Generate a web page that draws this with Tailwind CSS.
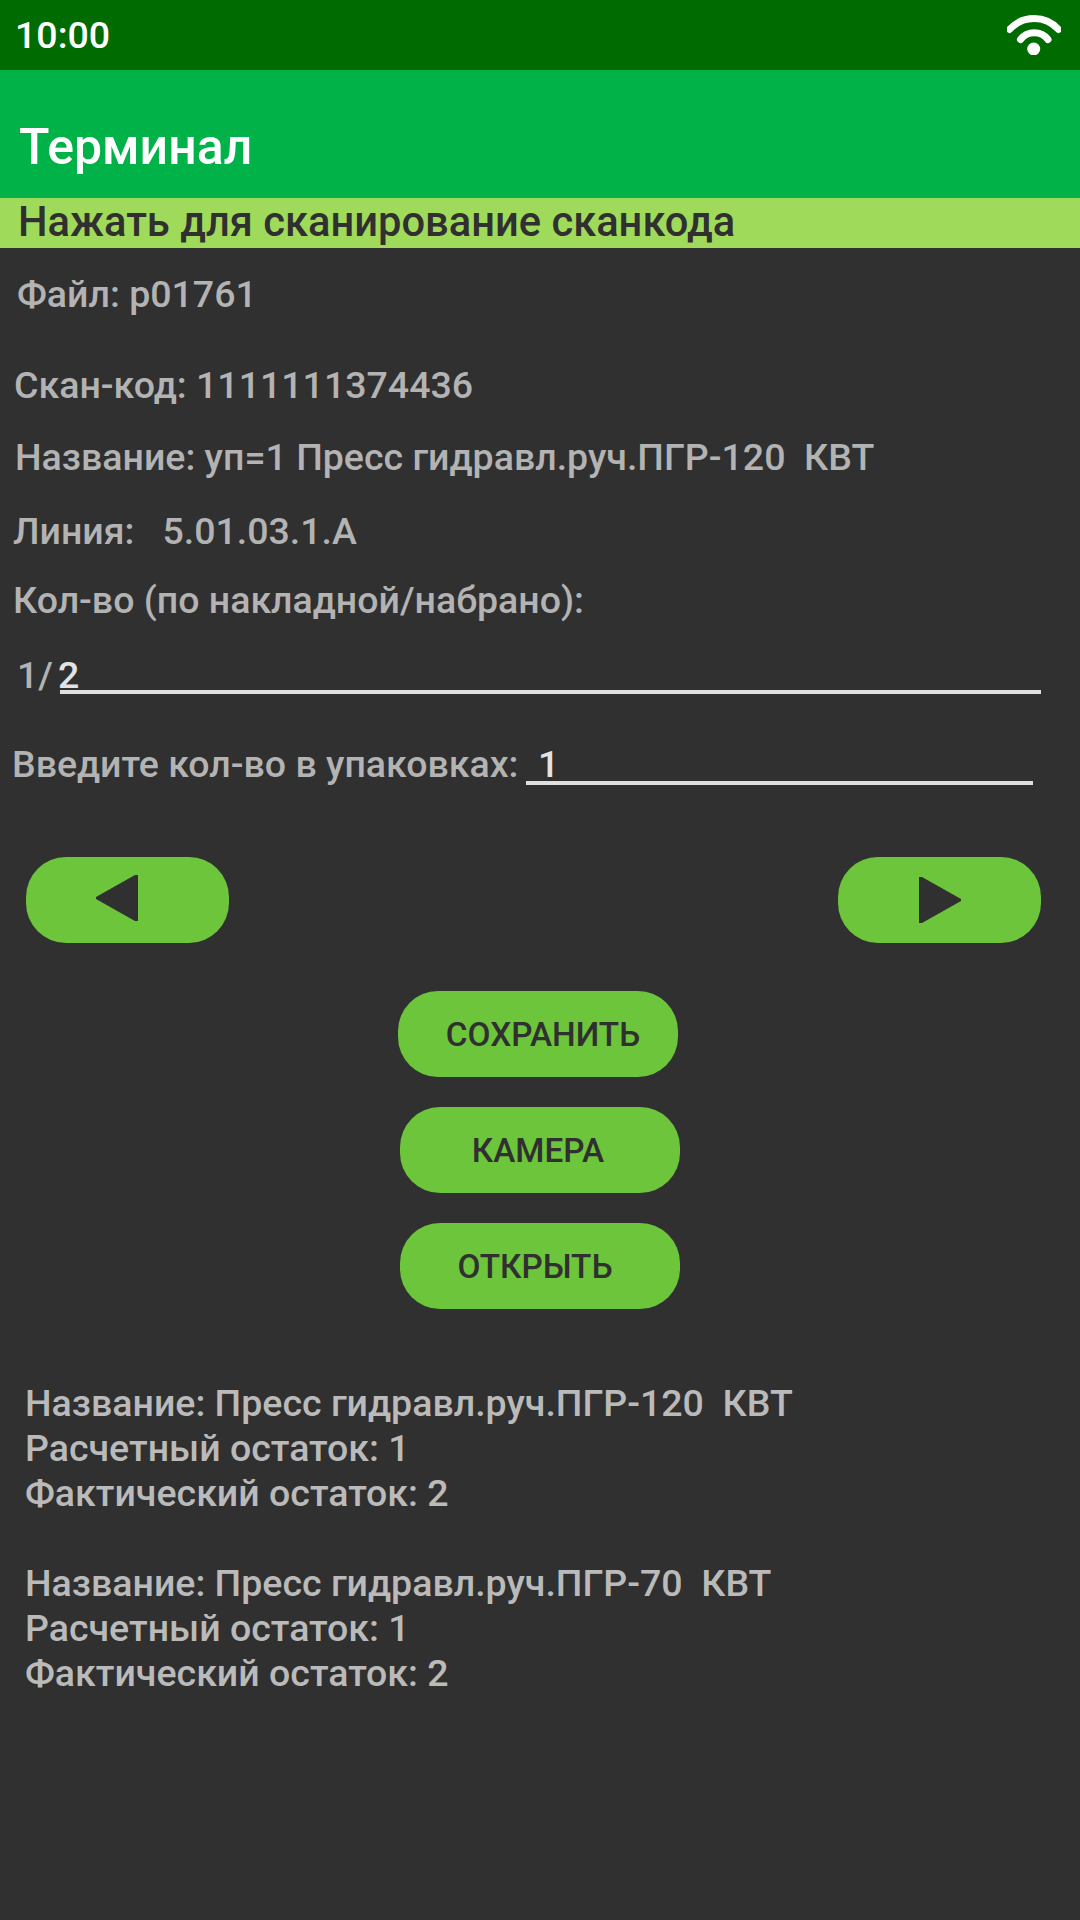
<!DOCTYPE html>
<html lang="ru">
<head>
<meta charset="utf-8">
<title>Терминал</title>
<script src="https://cdn.jsdelivr.net/npm/@tailwindcss/browser@4"></script>
</head>
<body class="bg-[#303030]">
<div class="w-[1080px] h-[1920px] overflow-hidden bg-[#303030] text-[#b3b3b3] font-['Roboto',sans-serif] font-medium text-[37.5px] leading-[44px] flex flex-col">
  <header class="h-[70px] shrink-0 bg-[#006b00] text-white flex justify-between pl-[15px] pr-[19px]">
    <span class="pt-[13px]">10:00</span>
    <svg class="w-[54px] h-[40px] mt-[15px]" viewBox="0 0 54 40" fill="none" stroke="#fff" stroke-width="7" stroke-linecap="round">
      <path d="M2.500 14.500A33 33 0 0 1 51.500 14.500"/>
      <path d="M13.500 24.500A17.500 17.500 0 0 1 41 24.500"/>
      <circle cx="26.700" cy="34" r="6.500" fill="#fff" stroke="none"/>
    </svg>
  </header>
  <h1 class="h-[128px] shrink-0 bg-[#00b248] text-white text-[50px] leading-[60px] pt-[47px] pl-[19px]">Терминал</h1>
  <button class="h-[50px] shrink-0 bg-[#a0da5b] text-[#303030] text-left text-[41.67px] leading-[48px] pl-[18px] pb-[2px]">Нажать для сканирование сканкода</button>

  <main class="flex flex-col whitespace-nowrap">
    <p class="mt-[24px] pl-[17px]">Файл: p01761</p>
    <p class="mt-[47px] pl-[14px]">Скан-код: 1111111374436</p>
    <p class="mt-[28px] pl-[15px]">Название: уп=1 Пресс гидравл.руч.ПГР-120&nbsp; КВТ</p>
    <p class="mt-[30px] pl-[13px]">Линия:&nbsp;&nbsp; 5.01.03.1.А</p>
    <p class="mt-[25px] pl-[13px]">Кол-во (по накладной/набрано):</p>
    <div class="mt-[31px] h-[41px] pl-[17px] pr-[39px] flex">
      <span class="w-[43px]">1/</span>
      <span class="flex-1 border-b-4 border-[#e0e0e0] text-[#e3e3e3]"><span class="-ml-[2px]">2</span></span>
    </div>
    <div class="mt-[48px] h-[43px] pl-[12px] pr-[47px] flex">
      <span class="w-[514px]">Введите кол-во в упаковках:</span>
      <span class="flex-1 border-b-4 border-[#e0e0e0] text-[#e3e3e3] pl-[12px]">1</span>
    </div>

    <div class="mt-[72px] pl-[26px] pr-[39px] flex justify-between">
      <button class="w-[203px] h-[86px] rounded-[40px] bg-[#6cc53b]" aria-label="Назад">
        <svg class="w-[203px] h-[86px]" viewBox="0 0 203 86" fill="#303030"><path d="M112 18V64H109L70 42V40L109 18Z"/></svg>
      </button>
      <button class="w-[203px] h-[86px] rounded-[40px] bg-[#6cc53b]" aria-label="Вперёд">
        <svg class="w-[203px] h-[86px]" viewBox="0 0 203 86" fill="#303030"><path d="M81 20V66H84L123 44V42L84 20Z"/></svg>
      </button>
    </div>

    <div class="mt-[48px] pl-[400px] flex flex-col gap-[30px] text-[#303030] text-[33.33px] leading-[39px]">
      <button class="-ml-[2px] w-[280px] h-[86px] rounded-[40px] bg-[#6cc53b] pl-[10px] pt-px">СОХРАНИТЬ</button>
      <button class="w-[280px] h-[86px] rounded-[40px] bg-[#6cc53b] pr-[4px] pt-px">КАМЕРА</button>
      <button class="w-[280px] h-[86px] rounded-[40px] bg-[#6cc53b] pr-[10px] pt-px">ОТКРЫТЬ</button>
    </div>

    <div class="mt-[72px] pl-[25px] flex flex-col gap-[46px] text-[#bababa]">
      <div class="flex flex-col gap-px">
        <p>Название: Пресс гидравл.руч.ПГР-120&nbsp; КВТ</p>
        <p>Расчетный остаток: 1</p>
        <p>Фактический остаток: 2</p>
      </div>
      <div class="flex flex-col gap-px">
        <p>Название: Пресс гидравл.руч.ПГР-70&nbsp; КВТ</p>
        <p>Расчетный остаток: 1</p>
        <p>Фактический остаток: 2</p>
      </div>
    </div>
  </main>
</div>
</body>
</html>
